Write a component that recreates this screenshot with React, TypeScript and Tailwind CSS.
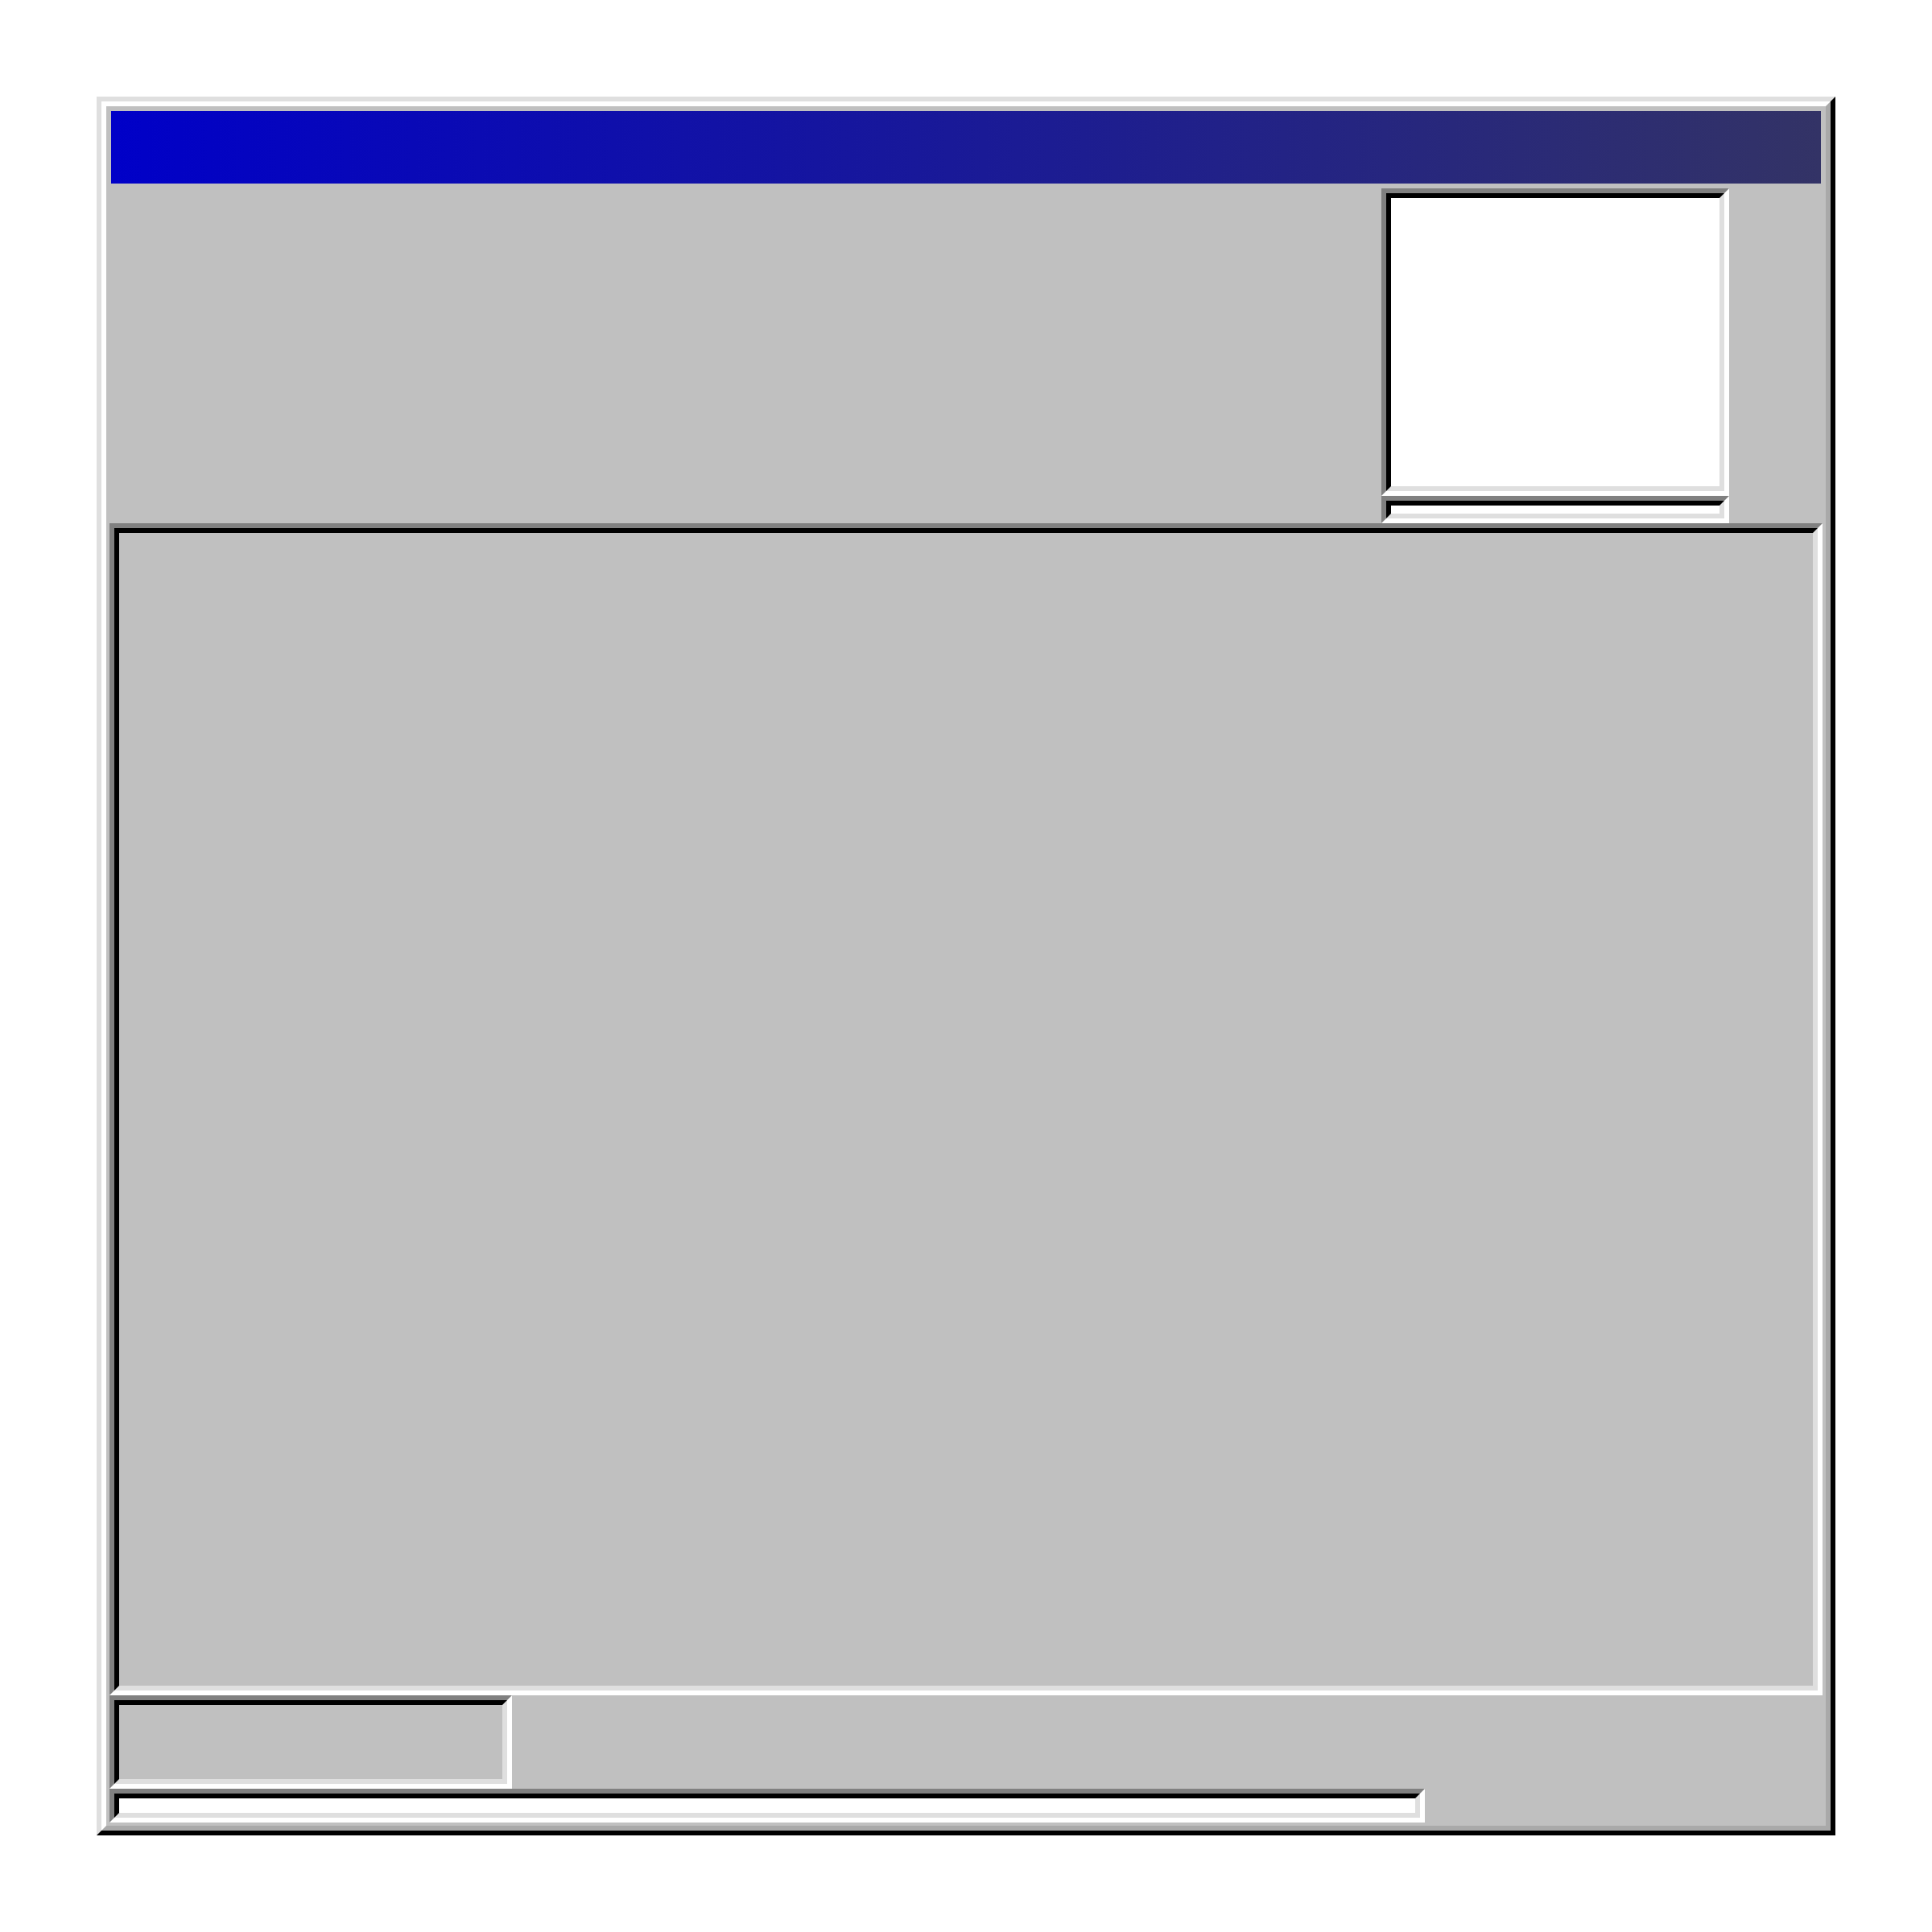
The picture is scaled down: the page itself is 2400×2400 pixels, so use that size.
function Sunken({ className, inner }: { className: string; inner: string }) {
  return (
    <div className={`border-[6px] border-t-[#808080] border-l-[#808080] border-r-white border-b-white ${className}`}>
      <div className={`h-full w-full border-[6px] border-t-black border-l-black border-r-[#dfdfdf] border-b-[#dfdfdf] ${inner}`} />
    </div>
  );
}

export default function App() {
  return (
    <div className="w-[2400px] h-[2400px] bg-white pt-[120px] pl-[120px]">
      <div className="w-[2160px] h-[2160px] border-[6px] border-t-[#dfdfdf] border-l-[#dfdfdf] border-r-black border-b-black">
        <div className="flex h-full w-full flex-col border-[6px] border-t-white border-l-white border-r-[#a9a9a9] border-b-[#a9a9a9] bg-[#c0c0c0] px-[4px] pt-[6px] pb-[4px]">
          {/* title bar */}
          <div className="mx-[2px] h-[90px] shrink-0 bg-[linear-gradient(to_right,#0000c8,#333366)]" />

          {/* top area with preview box */}
          <div className="flex h-[422px] shrink-0 flex-col pl-[1580px] pt-[6px]">
            <Sunken className="h-[382px] w-[432px]" inner="bg-white" />
            <Sunken className="h-[34px] w-[432px]" inner="bg-white" />
          </div>

          {/* main panel */}
          <Sunken className="h-[1456px] w-full shrink-0" inner="bg-[#c0c0c0]" />

          {/* status row */}
          <Sunken className="h-[116px] w-[500px] shrink-0" inner="bg-[#c0c0c0]" />
          <Sunken className="h-[42px] w-[1634px] shrink-0" inner="bg-white" />
        </div>
      </div>
    </div>
  );
}
